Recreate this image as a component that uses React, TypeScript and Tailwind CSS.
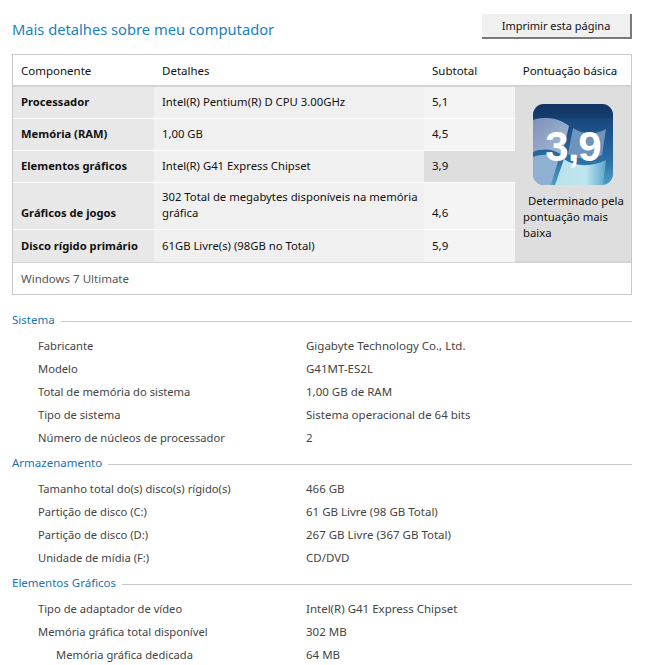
// App.tsx
const font = { fontFamily: '"Noto Sans", Tahoma, sans-serif' };

const rows = [
  { name: "Processador", details: "Intel(R) Pentium(R) D CPU 3.00GHz", score: "5,1", h: "h-[32px]" },
  { name: "Memória (RAM)", details: "1,00 GB", score: "4,5", h: "h-[32px]" },
  { name: "Elementos gráficos", details: "Intel(R) G41 Express Chipset", score: "3,9", h: "h-[32px]", low: true },
  { name: "Gráficos de jogos", details: "302 Total de megabytes disponíveis na memória gráfica", score: "4,6", h: "h-[47px]" },
  { name: "Disco rígido primário", details: "61GB Livre(s) (98GB no Total)", score: "5,9", h: "h-[32px]" },
];

const sections = [
  {
    title: "Sistema",
    items: [
      ["Fabricante", "Gigabyte Technology Co., Ltd."],
      ["Modelo", "G41MT-ES2L"],
      ["Total de memória do sistema", "1,00 GB de RAM"],
      ["Tipo de sistema", "Sistema operacional de 64 bits"],
      ["Número de núcleos de processador", "2"],
    ],
  },
  {
    title: "Armazenamento",
    items: [
      ["Tamanho total do(s) disco(s) rígido(s)", "466 GB"],
      ["Partição de disco (C:)", "61 GB Livre (98 GB Total)"],
      ["Partição de disco (D:)", "267 GB Livre (367 GB Total)"],
      ["Unidade de mídia (F:)", "CD/DVD"],
    ],
  },
  {
    title: "Elementos Gráficos",
    items: [
      ["Tipo de adaptador de vídeo", "Intel(R) G41 Express Chipset"],
      ["Memória gráfica total disponível", "302 MB"],
      ["Memória gráfica dedicada", "64 MB", "sub"],
    ],
  },
];

function ScoreBadge() {
  return (
    <div className="relative h-[81px] w-[80px]">
      <svg viewBox="0 0 80 81" className="absolute inset-0 h-full w-full">
        <defs>
          <linearGradient id="bg" x1="0" y1="0" x2="0" y2="1">
            <stop offset="0" stopColor="#123a68" />
            <stop offset="0.3" stopColor="#1c4f88" />
            <stop offset="0.7" stopColor="#2a70a4" />
            <stop offset="1" stopColor="#4f9fc6" />
          </linearGradient>
          <linearGradient id="flagL" x1="0" y1="0" x2="1" y2="1">
            <stop offset="0" stopColor="#7d90b8" />
            <stop offset="1" stopColor="#a9bfd8" />
          </linearGradient>
          <linearGradient id="flagB" x1="0" y1="0" x2="1" y2="0">
            <stop offset="0" stopColor="#b8e2ea" />
            <stop offset="0.6" stopColor="#bfe6ee" />
            <stop offset="1" stopColor="#5aa6cc" />
          </linearGradient>
          <clipPath id="round">
            <rect width="80" height="81" rx="11" />
          </clipPath>
        </defs>
        <g clipPath="url(#round)">
          <rect width="80" height="81" fill="url(#bg)" />
          <path d="M0 16 C12 12 26 14 36 22 L29 51 C20 45 10 44 0 48 Z" fill="url(#flagL)" />
          <path d="M0 53 C8 50 18 50 26 54 L18 81 L0 81 Z" fill="#8fb0d0" />
          <path d="M31 55 C42 63 60 63 73 56 L70 81 L22 81 Z" fill="url(#flagB)" />
          <path d="M40 24 C50 31 62 31 73 25 L69 51 C58 57 46 56 35 50 Z" fill="#6f93bd" />
          <rect width="80" height="14" fill="#0e2f58" opacity="0.35" />
        </g>
      </svg>
      <span
        className="absolute inset-0 flex items-center justify-center pt-[5px] text-[42px] font-bold tracking-[-1px] text-white"
        style={{ fontFamily: '"Liberation Sans", sans-serif' }}
      >
        3,9
      </span>
    </div>
  );
}

export default function App() {
  return (
    <div className="h-[665px] w-[648px] overflow-hidden bg-white text-[11.5px] leading-[16px] text-[#111]" style={font}>
      <div className="flex items-start justify-between pl-[12px] pr-[16px] pt-[14px]">
        <h1 className="pt-[5px] text-[14.7px] leading-[21px] text-[#1b7fc0]">Mais detalhes sobre meu computador</h1>
        <button className="flex h-[25px] w-[150px] items-center justify-center border-b-2 border-r-2 border-b-[#7a7a7a] border-r-[#7a7a7a] bg-[#f0f0f0] pt-[1px] text-[11px]">
          Imprimir esta página
        </button>
      </div>

      <div className="ml-[12px] mt-[14px] w-[620px] border border-[#c8c8c8]">
        <div className="flex h-[32px] items-center border-b-2 border-[#d4d4d4] pt-[1px]">
          <div className="w-[141px] pl-[8px]">Componente</div>
          <div className="w-[270px] pl-[8px]">Detalhes</div>
          <div className="w-[91px] pl-[8px]">Subtotal</div>
          <div className="flex-1 pr-[6px] text-center">Pontuação básica</div>
        </div>
        <div className="flex h-[176px] border-b-2 border-[#d4d4d4]">
          <div className="w-[502px]">
            {rows.map((r) => (
              <div key={r.name} className={`flex border-b border-white last:border-b-0 ${r.h}`}>
                <div className="flex w-[141px] items-end bg-[#e8e8e8] pb-[8px] pl-[8px] text-[11.2px] font-bold">{r.name}</div>
                <div className="flex w-[270px] items-end bg-[#f0f0f0] pb-[8px] pl-[8px]">
                  <span className="text-[11.3px]">{r.details}</span>
                </div>
                <div className={`flex w-[91px] items-end pb-[8px] pl-[8px] ${r.low ? "bg-[#dedede]" : "bg-[#f4f4f4]"}`}>
                  {r.score}
                </div>
              </div>
            ))}
          </div>
          <div className="flex-1 bg-[#dedede] pl-[8px] pr-[4px] pt-[17px]">
            <div className="ml-[10px]">
              <ScoreBadge />
            </div>
            <p className="mt-[8px] indent-[5px] text-[11.3px]">Determinado pela pontuação mais baixa</p>
          </div>
        </div>
        <div className="flex h-[31px] items-center pl-[8px] text-[#555]">Windows 7 Ultimate</div>
      </div>

      <div className="mt-[16px]">
        {sections.map((s) => (
          <section key={s.title} className="mb-[5px]">
            <div className="flex h-[17px] items-center pl-[12px] pr-[16px]">
              <span className="text-[#1b73b0]">{s.title}</span>
              <span className="ml-[6px] mt-[3px] h-px flex-1 bg-[#c8c8c8]" />
            </div>
            <div className="pt-[6px]">
              {s.items.map(([label, value, sub]) => (
                <div key={label} className="flex h-[23px] items-center text-[#444]">
                  <div className={sub ? "w-[306px] pl-[56px] text-[11.2px]" : "w-[306px] pl-[38px] text-[11.2px]"}>{label}</div>
                  <div>{value}</div>
                </div>
              ))}
            </div>
          </section>
        ))}
      </div>
    </div>
  );
}
